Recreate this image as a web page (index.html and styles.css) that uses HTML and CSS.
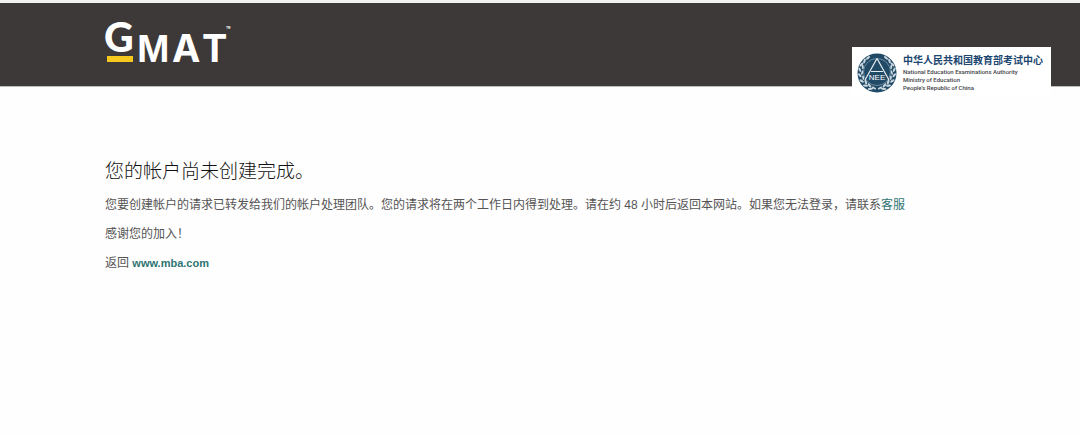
FILE: index.html
```html
<!DOCTYPE html>
<html lang="zh-CN">
<head>
    <meta charset="UTF-8">
    <meta name="viewport" content="width=device-width, initial-scale=1.0">
    <title>GMAT</title>
    <link rel="stylesheet" href="styles.css">
</head>
<body>
    <header class="site-header">
        <svg class="gmat-logo" width="130" height="46" viewBox="0 0 130 46" role="img" aria-label="GMAT">
            <text class="gmat-g" x="-1" y="32">G</text>
            <rect x="2" y="36" width="26" height="6" fill="#f6c81d"/>
            <text class="gmat-m" x="32" y="42">M</text>
            <text class="gmat-at" x="67 97" y="42">AT</text>
            <text class="gmat-tm" x="121" y="12">™</text>
        </svg>

        <div class="neea">
            <svg class="neea-seal" width="40" height="40" viewBox="0 0 40 40" aria-hidden="true">
                <circle cx="20" cy="20" r="19.5" fill="#214a66"/>
                <!-- laurel wreath, left half and its mirror -->
                <g id="laurel" fill="#c9d6df">
                    <ellipse cx="11" cy="4.8" rx="2.5" ry="1.1" transform="rotate(-40 11 4.8)"/>
                    <ellipse cx="7.5" cy="8" rx="2.5" ry="1.1" transform="rotate(-70 7.5 8)"/>
                    <ellipse cx="4.5" cy="11.5" rx="2.5" ry="1.1" transform="rotate(-45 4.5 11.5)"/>
                    <ellipse cx="5.8" cy="14" rx="2.3" ry="1" transform="rotate(-95 5.8 14)"/>
                    <ellipse cx="2.8" cy="16.8" rx="2.4" ry="1.1" transform="rotate(65 2.8 16.8)"/>
                    <ellipse cx="5.3" cy="19.5" rx="2.3" ry="1" transform="rotate(-70 5.3 19.5)"/>
                    <ellipse cx="2.8" cy="22.3" rx="2.4" ry="1.1" transform="rotate(50 2.8 22.3)"/>
                    <ellipse cx="6.2" cy="24.7" rx="2.4" ry="1" transform="rotate(-95 6.2 24.7)"/>
                    <ellipse cx="4.7" cy="28" rx="2.5" ry="1.1" transform="rotate(30 4.7 28)"/>
                    <ellipse cx="8.8" cy="29" rx="2.5" ry="1.1" transform="rotate(70 8.8 29)"/>
                    <ellipse cx="8.5" cy="32.6" rx="2.6" ry="1.1" transform="rotate(10 8.5 32.6)"/>
                    <ellipse cx="12.5" cy="32.4" rx="2.5" ry="1.1" transform="rotate(48 12.5 32.4)"/>
                    <ellipse cx="13.4" cy="35.8" rx="2.8" ry="1.1" transform="rotate(-5 13.4 35.8)"/>
                    <ellipse cx="17" cy="35" rx="2.4" ry="1" transform="rotate(30 17 35)"/>
                </g>
                <use href="#laurel" transform="translate(40 0) scale(-1 1)"/>
                <circle cx="20" cy="19" r="13.5" fill="#214a66" stroke="#8ea6b7" stroke-width="0.7"/>
                <path d="M20 5.5 L8 27 M20 5.5 L32 27 M14 18.5 H26" fill="none" stroke="#e6edf2" stroke-width="1.2"/>
                <text class="seal-text" x="20" y="27" text-anchor="middle">NEE</text>
            </svg>
            <div class="neea-names">
                <p class="neea-cn">中华人民共和国教育部考试中心</p>
                <p class="neea-en">National Education Examinations Authority</p>
                <p class="neea-en">Ministry of Education</p>
                <p class="neea-en">People's Republic of China</p>
            </div>
        </div>
    </header>

    <main class="content">
        <h1>您的帐户尚未创建完成。</h1>
        <p>您要创建帐户的请求已转发给我们的帐户处理团队。您的请求将在两个工作日内得到处理。请在约 48 小时后返回本网站。如果您无法登录，请联系<a href="#">客服</a></p>
        <p>感谢您的加入！</p>
        <p>返回 <a class="home-link" href="#">www.mba.com</a></p>
    </main>
</body>
</html>
```

FILE: styles.css
```css
body {
    margin: 0;
    background-color: #fefefe;
    color: #555354;
    font-family: "Liberation Sans", "Noto Sans CJK SC", sans-serif;
    font-size: 12px;
    line-height: 19px;
}

.site-header {
    display: flex;
    justify-content: space-between;
    align-items: flex-start;
    height: 83px;
    padding: 0 29px 0 105px;
    border-top: 3px solid #f3f2f2;
    border-bottom: 1px solid #bdbbbb;
    background-color: #3e3939;
}

.gmat-logo {
    margin-top: 17px;
    overflow: visible;
    fill: #fff;
    font-family: Inter, sans-serif;
    font-weight: 700;
}

.gmat-g {
    font-family: Lato, sans-serif;
    font-size: 41px;
    font-weight: 900;
}

.gmat-m {
    font-family: "Liberation Sans Narrow", "Liberation Sans", sans-serif;
    font-size: 39px;
}

.gmat-at {
    font-size: 38px;
}

.gmat-tm {
    font-size: 7px;
}

/* white plate that hangs over the bottom edge of the bar */
.neea {
    display: flex;
    gap: 6px;
    box-sizing: border-box;
    width: 199px;
    height: 50px;
    margin-top: 44px;
    padding: 6px 5px 4px;
    background-color: #fff;
}

.neea-seal {
    flex: none;
}

.seal-text {
    fill: #fff;
    font-family: "Liberation Sans", sans-serif;
    font-size: 8px;
}

.neea p {
    margin: 0;
    white-space: nowrap;
}

.neea-names .neea-cn {
    margin-bottom: 1px;
    color: #1d4670;
    font-family: "Noto Sans CJK SC", sans-serif;
    font-size: 10px;
    font-weight: 700;
    line-height: 14px;
}

.neea-en {
    color: #3f4347;
    font-family: Roboto, sans-serif;
    font-size: 6px;
    font-weight: 500;
    line-height: 8px;
}

.content {
    padding: 71px 29px 0 105px;
}

.content h1 {
    margin: 0 0 11px;
    color: #111;
    font-size: 19px;
    font-weight: 300;
    line-height: 27px;
}

.content p {
    margin: 0 0 10px;
}

.content a {
    color: #2f7473;
    text-decoration: none;
}

.content a:hover {
    text-decoration: underline;
}

.content .home-link {
    font-size: 11px;
    font-weight: 700;
}
```
